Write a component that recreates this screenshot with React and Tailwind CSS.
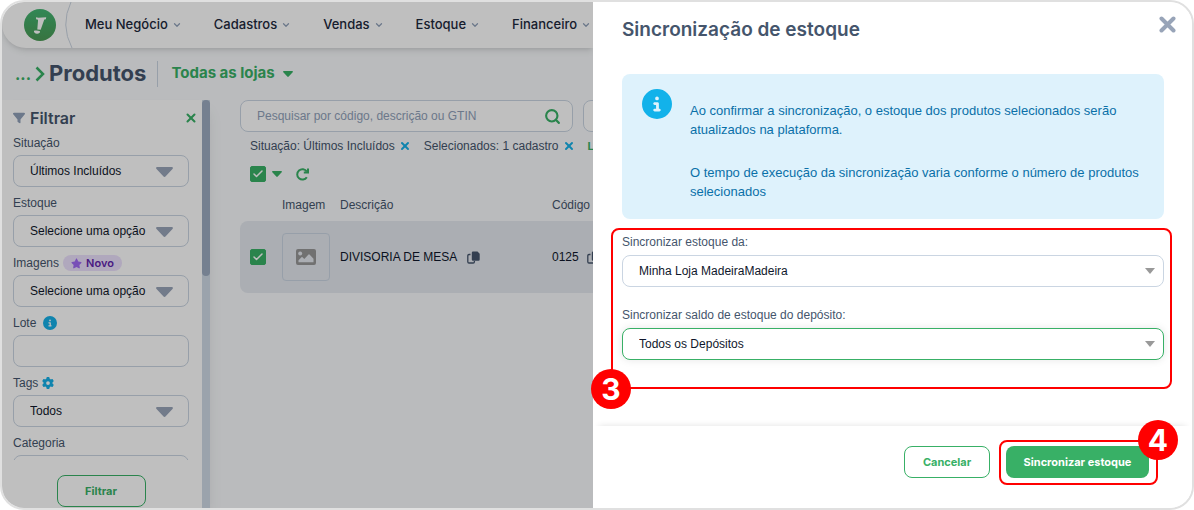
import { FaFilter, FaStar, FaCircleInfo, FaGear } from 'react-icons/fa6'
import { Check, ChevronDown, Search, X } from 'lucide-react'

const menus = ['Meu Negócio', 'Cadastros', 'Vendas', 'Estoque', 'Financeiro']

const Caret = ({ className }) => (
  <svg viewBox="0 0 10 6" preserveAspectRatio="none" className={className} aria-hidden="true">
    <path d="M0.8 0h8.4c0.7 0 1 0.7 0.5 1.2L5.7 5.6c-0.4 0.5-1 0.5-1.4 0L0.3 1.2C-0.2 0.7 0.1 0 0.8 0z" fill="currentColor" />
  </svg>
)

const CopyIcon = () => (
  <svg viewBox="0 0 13 13" className="h-[13px] w-[13px] text-slate-600" aria-hidden="true">
    <path d="M3.5 3.5H2A1.2 1.2 0 0 0 0.8 4.7V10.8A1.2 1.2 0 0 0 2 12H6.2A1.2 1.2 0 0 0 7.4 10.8V10" fill="none" stroke="currentColor" strokeWidth="1.3" />
    <path d="M6 0.5H10.5L12.7 2.7V8.5A1.2 1.2 0 0 1 11.5 9.7H6A1.2 1.2 0 0 1 4.8 8.5V1.7A1.2 1.2 0 0 1 6 0.5z" fill="currentColor" />
  </svg>
)

const PictureIcon = () => (
  <svg viewBox="0 0 20 16" className="h-4 w-5 text-[#979797]" aria-hidden="true">
    <path
      fillRule="evenodd"
      d="M2 0h16a2 2 0 0 1 2 2v12a2 2 0 0 1-2 2H2a2 2 0 0 1-2-2V2a2 2 0 0 1 2-2zM4.2 2.6a2 2 0 1 0 0.01 0zM2.5 13.2h15V9.8l-4-4.3a0.7 0.7 0 0 0-1 0L8.3 10 6.5 8.3a0.7 0.7 0 0 0-1 0l-3 3z"
      fill="currentColor"
    />
  </svg>
)

const RefreshIcon = () => (
  <svg viewBox="0 0 13 13" className="h-[13px] w-[13px] text-[#38b066]" fill="none" stroke="currentColor" strokeWidth="2" aria-hidden="true">
    <path d="M10.8 9.2A5.2 5.2 0 1 1 10.8 3.6" />
    <path d="M12 0.5V4.6H7.8" />
  </svg>
)

const Logo = () => (
  <svg viewBox="0 0 32 32" className="h-8 w-8 shrink-0" role="img" aria-label="Olist">
    <defs>
      <linearGradient id="logo" x1="0" y1="0" x2="0" y2="1">
        <stop offset="0" stopColor="#42b572" />
        <stop offset="1" stopColor="#4b9a55" />
      </linearGradient>
    </defs>
    <circle cx="16" cy="16" r="16" fill="url(#logo)" />
    <path d="M12 8.3l2.4 0.5 7.8-0.6-0.3 2-1.6 0.4-3.600 10.200-3.400-0.200 0.800-9.800-2-0.500z" fill="#fff" />
    <path d="M10 21.8c2-0.5 4.5-0.3 6 0.5 0.4 1.5-1.2 2.6-3 2.5-1.9-0.1-3.4-1.4-3-3z" fill="#fff" />
  </svg>
)

const CheckBox = ({ label }) => (
  <label className="relative flex h-4 w-4 items-center justify-center">
    <input
      type="checkbox"
      defaultChecked
      aria-label={label}
      className="h-4 w-4 appearance-none rounded-xs border border-[#38b066] checked:bg-[#38b066]"
    />
    <Check className="pointer-events-none absolute h-3 w-3 text-white" strokeWidth={3} />
  </label>
)

const FilterSelect = ({ id, label, value, children }) => (
  <div className="flex h-[60px] shrink-0 flex-col">
    <div className="flex h-6 items-center gap-1">
      <label htmlFor={id} className="text-[12px] text-slate-600">{label}</label>
      {children}
    </div>
    <div className="relative">
      <select
        id={id}
        className="block h-8 w-full appearance-none rounded-lg border border-slate-300 bg-white pl-4 text-[12px] text-slate-900"
      >
        <option>{value}</option>
      </select>
      <Caret className="pointer-events-none absolute top-3 right-4 h-[10px] w-[17px] text-[#98a4b8]" />
    </div>
  </div>
)

const DrawerSelect = ({ id, label, value, selectClass }) => (
  <div>
    <label htmlFor={id} className="block h-[25px] text-[12px] leading-6 text-slate-600">{label}</label>
    <div className="relative">
      <select
        id={id}
        className={`block h-8 w-full appearance-none rounded-lg border bg-white pl-4 text-[12px] text-slate-900 outline-none ${selectClass}`}
      >
        <option>{value}</option>
      </select>
      <svg viewBox="0 0 10 6" className="pointer-events-none absolute top-[13px] right-[9px] h-[6px] w-[10px]" aria-hidden="true">
        <path d="M0 0h10L5 6z" fill="#999" />
      </svg>
    </div>
  </div>
)

const TopBar = () => (
  <header className="relative z-10 flex h-[46px] shrink-0 items-center rounded-bl-[24px] bg-white pl-[22px] shadow-md">
    <Logo />
    <svg viewBox="0 0 10 46" className="ml-2 h-[46px] w-[10px] shrink-0" aria-hidden="true">
      <path d="M7 0Q-4 23 8 46" fill="none" stroke="#cbd5e1" strokeWidth="1" />
    </svg>
    <nav className="ml-[11px] flex gap-8 pb-px font-['Inter',sans-serif] text-[13px] font-medium text-slate-800">
      {menus.map((menu) => (
        <button key={menu} type="button" className="flex items-center gap-1 whitespace-nowrap">
          {menu}
          <ChevronDown className="h-2.5 w-2.5 text-slate-400" strokeWidth={3} />
        </button>
      ))}
    </nav>
  </header>
)

const Filters = () => (
  <aside className="flex w-[208px] shrink-0 bg-white shadow-lg">
    <div className="flex min-w-0 flex-1 flex-col">
      <div className="flex min-h-0 flex-1 flex-col overflow-hidden pr-[13px] pl-[11px]">
        <div className="flex h-[31px] shrink-0 items-center pt-[5px]">
          <FaFilter className="h-3 w-3 text-slate-400" />
          <h2 className="ml-[5px] flex-1 font-['Inter',sans-serif] text-[16px] font-semibold text-slate-600">Filtrar</h2>
          <button type="button" aria-label="Fechar filtros" className="-mr-[9px]">
            <X className="h-3.5 w-3.5 text-[#38b066]" strokeWidth={3.5} />
          </button>
        </div>
        <FilterSelect id="situacao" label="Situação" value="Últimos Incluídos" />
        <FilterSelect id="estoque" label="Estoque" value="Selecione uma opção" />
        <FilterSelect id="imagens" label="Imagens" value="Selecione uma opção">
          <span className="flex h-4 items-center gap-1 rounded-full bg-[#ebe0fc] px-2 font-['Inter',sans-serif] text-[11px] font-semibold text-[#6326ae]">
            <FaStar className="h-[11px] w-[11px] text-[#a06af5]" />
            Novo
          </span>
        </FilterSelect>
        <div className="flex h-[60px] shrink-0 flex-col">
          <div className="flex h-6 items-center gap-[7px]">
            <label htmlFor="lote" className="text-[12px] text-slate-600">Lote</label>
            <FaCircleInfo className="h-3.5 w-3.5 text-[#16b0e8]" />
          </div>
          <input id="lote" type="text" className="h-8 w-full rounded-lg border border-slate-300 bg-white px-4 text-[12px]" />
        </div>
        <FilterSelect id="tags" label="Tags" value="Todos">
          <FaGear className="h-3 w-3 text-[#16b0e8]" />
        </FilterSelect>
        <FilterSelect id="categoria" label="Categoria" value="Todas" />
      </div>
      <div className="flex h-12 shrink-0 justify-center pr-[2px]">
        <button
          type="button"
          className="mt-[15px] h-8 w-[89px] rounded-lg border border-[#38b066] font-['Inter',sans-serif] text-[11px] font-bold text-[#38b066]"
        >
          Filtrar
        </button>
      </div>
    </div>
    <div className="w-2 bg-[#cfdae6]">
      <div className="h-[176px] rounded-full bg-[#9cabc0]" />
    </div>
  </aside>
)

const Products = () => (
  <main className="ml-[30px] min-w-0 flex-1 overflow-hidden text-[12px] text-slate-600">
    <div className="flex w-[560px] gap-[10px]">
      <div className="flex h-8 w-[333px] items-center rounded-lg border border-slate-300 bg-white pr-[11px] pl-4">
        <input
          type="text"
          aria-label="Pesquisar"
          placeholder="Pesquisar por código, descrição ou GTIN"
          className="min-w-0 flex-1 text-[12px] outline-none placeholder:text-slate-400"
        />
        <Search className="h-[17px] w-[17px] text-[#38b066]" strokeWidth={3} />
      </div>
      <button type="button" aria-label="Mais filtros" className="h-8 flex-1 rounded-lg border border-slate-300 bg-white" />
    </div>
    <div className="flex h-7 w-[560px] items-center pl-[10px]">
      <span>Situação: Últimos Incluídos</span>
      <button type="button" aria-label="Remover situação" className="ml-1">
        <X className="h-3 w-3 text-[#16b0e8]" strokeWidth={4} />
      </button>
      <span className="ml-[13px]">Selecionados: 1 cadastro</span>
      <button type="button" aria-label="Remover selecionados" className="ml-1">
        <X className="h-3 w-3 text-[#16b0e8]" strokeWidth={4} />
      </button>
      <a href="#limpar" className="ml-[13px] font-['Inter',sans-serif] text-[11px] font-bold text-[#38b066]">Limpar filtros</a>
    </div>
    <div className="flex h-7 items-center pl-[10px]">
      <CheckBox label="Selecionar todos" />
      <Caret className="ml-[6px] h-[6px] w-[10px] text-[#38b066]" />
      <button type="button" aria-label="Atualizar" className="ml-[14px]">
        <RefreshIcon />
      </button>
    </div>
    <table className="w-[560px] table-fixed text-left">
      <thead>
        <tr className="h-[33px]">
          <th className="w-[42px]" />
          <th className="w-[58px] font-normal">Imagem</th>
          <th className="w-[212px] font-normal">Descrição</th>
          <th className="font-normal">Código</th>
        </tr>
      </thead>
      <tbody>
        <tr className="h-[72px] bg-[#e4e8ef] text-slate-900">
          <td className="rounded-l-lg pl-[10px]"><CheckBox label="Selecionar produto" /></td>
          <td>
            <div className="flex h-12 w-12 items-center justify-center rounded-sm border border-slate-300">
              <PictureIcon />
            </div>
          </td>
          <td>
            <span className="flex items-center gap-[10px]">DIVISORIA DE MESA <CopyIcon /></span>
          </td>
          <td>
            <span className="flex items-center gap-2">0125 <CopyIcon /></span>
          </td>
        </tr>
      </tbody>
    </table>
  </main>
)

const StepBadge = ({ className, children }) => (
  <span className={`absolute z-20 flex h-10 w-10 items-center justify-center rounded-full bg-[#ff0000] font-['Inter',sans-serif] text-[30px] leading-none font-bold text-white ${className}`}>
    {children}
  </span>
)

const SyncDrawer = () => (
  <section className="relative z-20 flex w-[599px] shrink-0 flex-col rounded-r-[22px] bg-white">
    <div className="flex h-[72px] shrink-0 items-start justify-between pt-3 pr-4 pl-[29px]">
      <h1 className="font-['Inter',sans-serif] text-[19px] leading-8 font-semibold text-slate-600">Sincronização de estoque</h1>
      <button type="button" aria-label="Fechar" className="pt-[2px]">
        <svg viewBox="0 0 17 17" className="h-[17px] w-[17px]" fill="none" stroke="#98a4b8" strokeWidth="4" strokeLinecap="round" aria-hidden="true">
          <path d="M2.5 2.5L14.5 14.5M14.5 2.5L2.5 14.5" />
        </svg>
      </button>
    </div>

    <div className="min-h-0 flex-1 pr-5 pl-[18px]">
      <div className="mr-2 ml-[11px] flex items-start rounded-lg bg-[#def2fc] px-5 py-[15px]">
        <FaCircleInfo className="h-[30px] w-[30px] shrink-0 text-[#12b2ea]" />
        <div className="ml-[18px] space-y-6 pt-3 pb-[3px] text-[13px] leading-[19px] text-[#0a70a8]">
          <p>Ao confirmar a sincronização, o estoque dos produtos selecionados serão atualizados na plataforma.</p>
          <p>O tempo de execução da sincronização varia conforme o número de produtos selecionados</p>
        </div>
      </div>

      <div className="relative mt-[9px] h-[161px] rounded-lg border-2 border-[#ff0000] pr-[6px] pl-[9px]">
        <DrawerSelect id="loja" label="Sincronizar estoque da:" value="Minha Loja MadeiraMadeira" selectClass="mb-4 border-slate-300" />
        <DrawerSelect
          id="deposito"
          label="Sincronizar saldo de estoque do depósito:"
          value="Todos os Depósitos"
          selectClass="border-[#38b066] shadow-[0_0_8px_rgba(0,0,0,0.1)]"
        />
        <StepBadge className="-bottom-[22px] -left-[22px]">3</StepBadge>
      </div>
    </div>

    <footer className="flex h-[82px] shrink-0 items-start justify-end gap-[9px] rounded-br-[22px] pr-[34px] pt-[14px] font-['Inter',sans-serif] text-[11px] font-bold shadow-[0_-6px_6px_-6px_rgba(0,0,0,0.12)]">
      <button type="button" className="mt-[6px] h-8 w-[86px] rounded-lg border border-[#38b066] text-[#38b066]">Cancelar</button>
      <div className="relative rounded-lg border-2 border-[#ff0000] pt-1 pr-[7px] pb-[5px] pl-[5px]">
        <button type="button" className="block h-8 w-[143px] rounded-lg bg-[#38b066] text-white">Sincronizar estoque</button>
        <StepBadge className="-top-[22px] -right-[22px]">4</StepBadge>
      </div>
    </footer>
  </section>
)

export default function App() {
  return (
    <div className="flex h-screen overflow-hidden rounded-3xl border-2 border-[#e0e0e0] bg-white font-['Liberation_Sans',Arial,sans-serif]">
      <div className="relative flex min-w-0 flex-1 flex-col overflow-hidden bg-[#f8fafc]">
        <TopBar />
        <div className="flex h-[52px] shrink-0 items-center pb-px pl-[13px] font-['Inter',sans-serif]">
          <a href="#inicio" className="text-[16px] font-bold text-[#38b066]">...</a>
          <svg viewBox="0 0 10 16" className="mr-1 ml-1 h-4 w-[10px]" fill="none" stroke="#38b066" strokeWidth="2.5" aria-hidden="true">
            <path d="M1.5 1.5L8 8L1.5 14.5" />
          </svg>
          <h1 className="text-[22px] font-bold text-slate-600">Produtos</h1>
          <span className="mr-[9px] ml-[11px] h-[26px] border-l border-slate-300 pr-1" />
          <button type="button" className="flex items-center gap-2 text-[15px] font-bold text-[#38b066]">
            Todas as lojas
            <Caret className="h-[6px] w-[10px]" />
          </button>
        </div>
        <div className="flex min-h-0 flex-1">
          <Filters />
          <Products />
        </div>
        <div className="absolute inset-0 z-10 bg-black/25" />
      </div>
      <SyncDrawer />
    </div>
  )
}
